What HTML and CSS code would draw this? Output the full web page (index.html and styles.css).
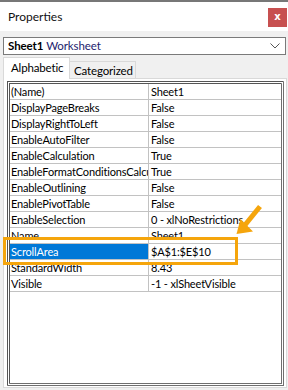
FILE: index.html
```html
<!DOCTYPE html>
<html>
<head>
    <title>Properties</title>
    <link rel="stylesheet" href="styles.css">
</head>
<body>
    <div class="window">
        <div class="titlebar">
            <span class="title">Properties</span>
            <div class="close">x</div>
        </div>

        <div class="object-select">
            <b>Sheet1</b>&nbsp;<span class="object-type">Worksheet</span>
            <svg class="chevron" width="10" height="6" viewBox="0 0 10 6">
                <path d="M0.5 0.5 L5 5 L9.5 0.5" fill="none" stroke="#555" stroke-width="1"/>
            </svg>
        </div>

        <div class="tabs">
            <div class="tab active">Alphabetic</div>
            <div class="tab">Categorized</div>
        </div>

        <div class="tab-page">
            <div class="grid">
                <div class="row"><div class="name">(Name)</div><div class="value">Sheet1</div></div>
                <div class="row"><div class="name">DisplayPageBreaks</div><div class="value">False</div></div>
                <div class="row"><div class="name">DisplayRightToLeft</div><div class="value">False</div></div>
                <div class="row"><div class="name">EnableAutoFilter</div><div class="value">False</div></div>
                <div class="row"><div class="name">EnableCalculation</div><div class="value">True</div></div>
                <div class="row"><div class="name">EnableFormatConditionsCalculation</div><div class="value">True</div></div>
                <div class="row"><div class="name">EnableOutlining</div><div class="value">False</div></div>
                <div class="row"><div class="name">EnablePivotTable</div><div class="value">False</div></div>
                <div class="row"><div class="name">EnableSelection</div><div class="value">0 - xlNoRestrictions</div></div>
                <div class="row"><div class="name">Name</div><div class="value">Sheet1</div></div>
                <div class="row selected"><div class="name">ScrollArea</div><div class="value">$A$1:$E$10</div></div>
                <div class="row"><div class="name">StandardWidth</div><div class="value">8.43</div></div>
                <div class="row"><div class="name">Visible</div><div class="value">-1 - xlSheetVisible</div></div>
            </div>
        </div>

        <!-- annotation drawn over the grid -->
        <svg class="annotation" width="288" height="390" viewBox="0 0 288 390">
            <rect x="4.5" y="238.5" width="232" height="25" fill="none" stroke="#f5a50c" stroke-width="3"/>
            <line x1="260" y1="206.5" x2="245" y2="225" stroke="#f5a50c" stroke-width="5"/>
            <polygon points="236.5,234 240.5,219 253,231.5" fill="#f5a50c"/>
        </svg>
    </div>
</body>
</html>
```

FILE: styles.css
```css
body {
    margin: 0;
    padding: 0;
    font-family: Lato, "Noto Sans", sans-serif;
    font-size: 11px;
    letter-spacing: -0.15px;
    color: #000;
    background-color: #f0f0f0;
}

.window {
    position: relative;
    width: 288px;
    height: 390px;
    overflow: hidden;
}

.titlebar {
    display: flex;
    justify-content: space-between;
    align-items: center;
    height: 29px;
    border-top: 2px solid #777;
    background-color: #fff;
    padding: 0 1px 0 8px;
}

.title {
    font-size: 12px;
    letter-spacing: 0;
    color: #111;
}

.close {
    width: 19px;
    height: 19px;
    margin-top: 2px;
    background-color: #c75050;
    color: #fff;
    font-family: "DejaVu Sans", sans-serif;
    font-weight: bold;
    font-size: 10px;
    line-height: 17px;
    text-align: center;
}

.object-select {
    display: flex;
    align-items: center;
    height: 16px;
    margin: 6px 2px 0 3px;
    padding: 0 4px;
    border: 1px solid #7a7a7a;
    background-color: #fff;
    font-size: 11.5px;
    letter-spacing: -0.1px;
    line-height: 16px;
}

.object-select b {
    font-weight: bold;
}

.object-type {
    color: #1c1c6e;
}

.chevron {
    margin-left: auto;
    margin-right: 1px;
}

.tabs {
    display: flex;
    align-items: flex-end;
    height: 20px;
    margin: 3px 0 0 3px;
    font-size: 11.5px;
}

.tab {
    height: 16px;
    line-height: 17px;
    padding-left: 4px;
    border: 1px solid #d9d9d9;
    border-bottom: none;
    background-color: #f0f0f0;
    width: 61px;
}

.tab.active {
    position: relative;
    z-index: 1;
    height: 21px;
    width: 58px;
    line-height: 19px;
    padding-left: 7px;
    margin-bottom: -1px;
    background-color: #fff;
}

.tab.active + .tab {
    border-left: none;
}

.tab-page {
    height: 305px;
    margin: 0 1px 0 3px;
    padding: 2px 1px 1px 3px;
    border: 1px solid #d9d9d9;
    background-color: #fff;
}

.grid {
    width: 271px;
    height: 299px;
    border: 3px double #6f6f6f;
    border-top-color: #555;
    border-left-color: #555;
    background-color: #fff;
}

.row {
    display: flex;
    height: 15px;
    line-height: 15px;
    border-bottom: 1px solid #c2c2c2;
}

.name {
    width: 137px;
    padding-left: 1px;
    border-right: 1px solid #c2c2c2;
    white-space: nowrap;
    overflow: hidden;
}

.value {
    flex: 1;
    padding-left: 2px;
    white-space: nowrap;
    overflow: hidden;
}

.selected .name {
    background-color: #0078d7;
    color: #fff;
}

.annotation {
    position: absolute;
    top: 0;
    left: 0;
    pointer-events: none;
}
```
